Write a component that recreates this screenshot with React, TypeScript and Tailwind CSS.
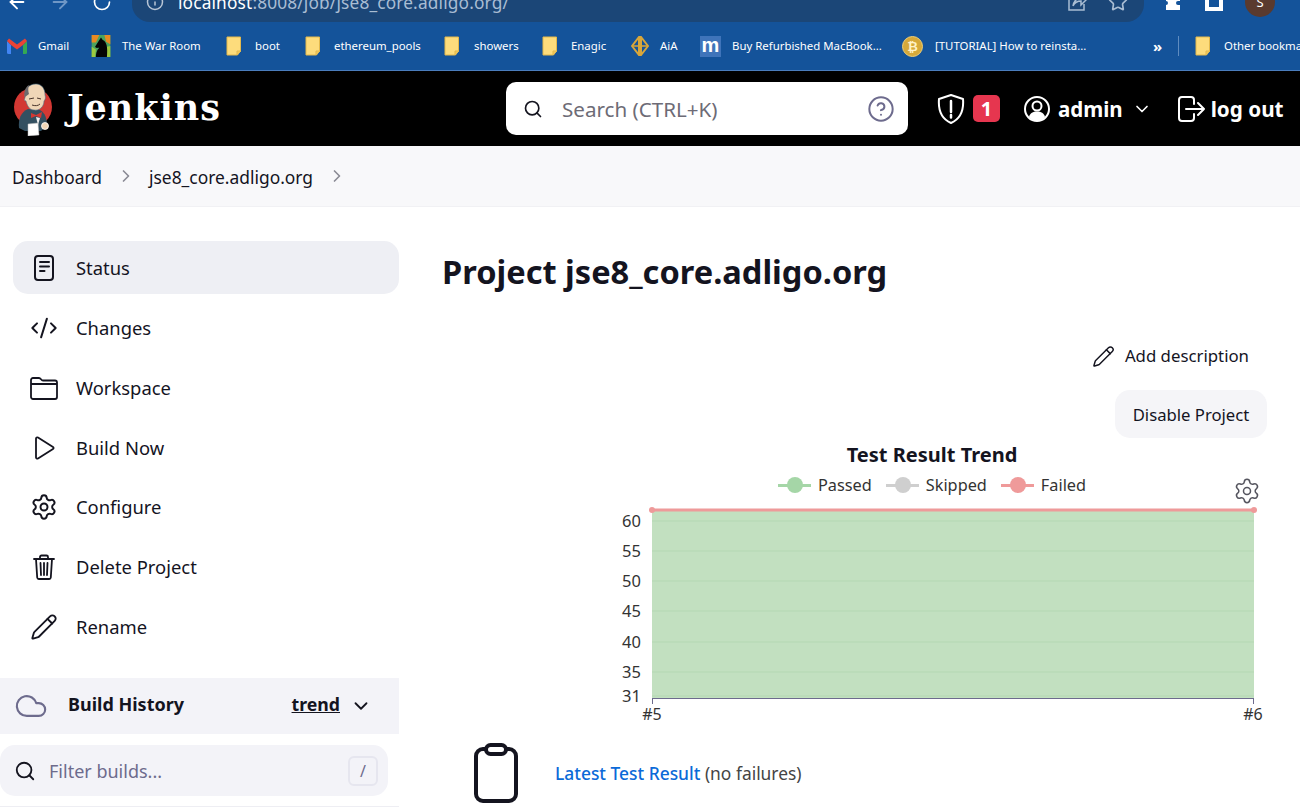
import { ArrowLeft, ArrowRight, ChevronDown, ChevronRight, CircleHelp, Cloud, CodeXml, Info, Pencil, RotateCw, Search, Settings, Star } from "lucide-react";
import type { ReactNode } from "react";

const font = "font-['Noto_Sans','Open_Sans',sans-serif]";

function FolderMark({ className }: { className: string }) {
  return (
    <svg viewBox="0 0 16 20" className={className}>
      <path d="M1 1h13.5v14l-3 4H1z" fill="#fddc7c" stroke="#e3b94c" strokeWidth="1" />
      <path d="M11 19v-4h4" fill="#f2c85c" stroke="#e3b94c" strokeWidth="1" />
    </svg>
  );
}

function GmailMark() {
  return (
    <svg viewBox="0 0 20 16" className="w-[20px] h-[16px]">
      <path d="M0 3v11.5A1.5 1.5 0 0 0 1.5 16H4V7z" fill="#4285f4" />
      <path d="M20 3v11.5a1.5 1.5 0 0 1-1.500 1.500H16V7z" fill="#34a853" />
      <path d="M0 3l4 4 6 4.500 6-4.500 4-4-2-2.500-8 6-8-6z" fill="#ea4335" />
    </svg>
  );
}

function KnightMark() {
  return (
    <svg viewBox="0 0 22 26" className="w-[22px] h-[22px]">
      <rect width="22" height="26" fill="#4ba35f" />
      <path d="M0 0h9l-4 9H0zM15 0h7v11l-5-3z" fill="#e98a22" />
      <path d="M0 14l5 3-1 9H0zM18 14l4-1v13h-5z" fill="#9bc93f" />
      <path d="M5 26c0-6 2-9 4-11-2 0-4 1-5-1l5-8 2-3 2 3c5 2 6 9 5 20z" fill="#050505" />
    </svg>
  );
}

function AiaMark() {
  return (
    <svg viewBox="0 0 18 20" className="w-[18px] h-[20px]">
      <path d="M8 1v18L1 10zM10 1v18l7-9z" fill="none" stroke="#d8a63a" strokeWidth="2" />
      <path d="M1 10h16" stroke="#d8a63a" strokeWidth="1.500" />
    </svg>
  );
}

function MMark() {
  return (
    <div className="w-[21px] h-[21px] bg-[#3f74ba] text-white text-[20px] leading-[18px] font-bold text-center font-['Liberation_Sans',sans-serif]">m</div>
  );
}

function CoinMark() {
  return (
    <div className="w-[21px] h-[21px] rounded-full bg-[#d6a93a] border border-[#f0cf76] text-[#fff2c6] text-[13px] leading-[19px] font-bold text-center font-['Liberation_Sans',sans-serif]">₿</div>
  );
}

const bookmarks: { label: string; icon: ReactNode; width: string; gap: string }[] = [
  { label: "Gmail", icon: <GmailMark />, width: "w-[83px]", gap: "w-[11px]" },
  { label: "The War Room", icon: <KnightMark />, width: "w-[136px]", gap: "w-[10px]" },
  { label: "boot", icon: <FolderMark className="w-[16px] h-[20px]" />, width: "w-[79px]", gap: "w-[13px]" },
  { label: "ethereum_pools", icon: <FolderMark className="w-[16px] h-[20px]" />, width: "w-[139px]", gap: "w-[13px]" },
  { label: "showers", icon: <FolderMark className="w-[16px] h-[20px]" />, width: "w-[98px]", gap: "w-[14px]" },
  { label: "Enagic", icon: <FolderMark className="w-[16px] h-[20px]" />, width: "w-[89px]", gap: "w-[13px]" },
  { label: "AiA", icon: <AiaMark />, width: "w-[69px]", gap: "w-[11px]" },
  { label: "Buy Refurbished MacBook...", icon: <MMark />, width: "w-[202px]", gap: "w-[11px]" },
  { label: "[TUTORIAL] How to reinsta...", icon: <CoinMark />, width: "w-[251px]", gap: "w-[12px]" },
];

function Bookmark({ label, icon, width, gap }: { label: string; icon: ReactNode; width: string; gap: string }) {
  return (
    <div className={`flex items-center shrink-0 ${width}`}>
      {icon}
      <div className={gap} />
      <span className="text-[11.4px] text-white whitespace-nowrap">{label}</span>
    </div>
  );
}

function BrowserBar() {
  return (
    <div className="bg-[#14539a] h-[71px] border-b border-[#4a7cbc] overflow-hidden">
      {/* toolbar is cut off by the top edge of the shot */}
      <div className="h-[22px] flex items-end overflow-hidden text-white">
        <div className="flex items-center h-[40px] w-[132px] pl-[6px] gap-[21px] shrink-0">
          <ArrowLeft size={22} />
          <ArrowRight size={22} className="text-[#6f97c6]" />
          <RotateCw size={20} />
        </div>
        <div className="flex items-center h-[40px] w-[1012px] shrink-0 rounded-[18px] bg-[#1b4677] pl-[14px] pr-[14px]">
          <Info size={18} className="text-[#b9c6d6]" />
          <span className="ml-[14px] pt-[2px] text-[17.3px] tracking-[0.15px] whitespace-nowrap">
            localhost<span className="text-[#a9bdd3]">:8008/job/jse8_core.adligo.org/</span>
          </span>
          <div className="ml-auto flex items-center gap-[21px] text-[#a9bdd3]">
            <svg viewBox="0 0 20 20" className="w-[20px] h-[20px]" fill="none" stroke="currentColor" strokeWidth="1.500">
              <path d="M17 12v6H2V5h7M6 14c1-5 4-8 8-8V2l5 6-5 5V9c-3 0-6 1-8 5z" />
            </svg>
            <Star size={20} className="mr-[2px]" />
          </div>
        </div>
        <div className="flex items-center h-[40px] pl-[19px] gap-[20px]">
          <svg viewBox="0 0 20 20" className="w-[20px] h-[20px]" fill="currentColor">
            <path d="M8 2a2 2 0 0 1 4 0v2h5v5h-2a2 2 0 0 0 0 4h2v5H3v-5a2 2 0 0 0 0-4V4h5z" />
          </svg>
          <div className="w-[18px] h-[18px] border-[4px] border-white bg-transparent ml-[2px]" />
          <div className="w-[30px] h-[30px] rounded-full bg-[#5a3a2e] text-[13px] text-white text-center leading-[30px] ml-[2px]">S</div>
        </div>
      </div>
      <div className="h-[48px] flex items-center pl-[7px]">
        {bookmarks.map((item) => (
          <Bookmark key={item.label} {...item} />
        ))}
        <span className="text-[15px] text-white font-bold w-[25px] shrink-0">»</span>
        <div className="w-px h-[20px] bg-[#5f8cc0] shrink-0" />
        <FolderMark className="w-[16px] h-[20px] ml-[16px] shrink-0" />
        <span className="text-[11.4px] text-white ml-[13px] whitespace-nowrap">Other bookmarks</span>
      </div>
    </div>
  );
}

function JenkinsLogo() {
  return (
    <svg viewBox="0 0 40 54" className="w-[40px] h-[54px]">
      <circle cx="20" cy="25" r="19" fill="#d33833" />
      <path d="M6 46c-1-9 2-16 9-19l12 1c5 3 7 8 7 16l-6 5H12z" fill="#335061" />
      <path d="M12 16c-1-9 4-14 11-14 6 0 9 5 9 11 1 3 0 5-1 6 0 6-5 10-10 9-5 0-7-5-8-9-2 0-2-2-1-3z" fill="#f0d6b7" stroke="#49728b" strokeWidth="0.600" />
      <path d="M12 15c-2-7 2-11 4-12-1 3-1 6 0 9z" fill="#6d6b6d" />
      <path d="M16 17l5-1M24 16l4 1M19 23c3 1 6 1 8-1" stroke="#49352c" strokeWidth="1" fill="none" />
      <path d="M18 31l5 2 6-3-1 6-5-2-5 2z" fill="#d33833" />
      <path d="M23 35l4 1-2 7z" fill="#eeeeee" />
      <path d="M15 42l10-1 1 12-11 1z" fill="#ffffff" stroke="#bbbbbb" strokeWidth="0.500" />
      <circle cx="32" cy="44" r="3.500" fill="#f0d6b7" stroke="#ffffff" strokeWidth="0.800" />
    </svg>
  );
}

function AppHeader() {
  return (
    <header className="h-[75px] bg-black flex items-center text-white shrink-0">
      <div className="w-[506px] flex items-center pl-[13px] shrink-0">
        <JenkinsLogo />
        <span className="ml-[14px] mb-[2px] text-[35px] leading-none font-bold tracking-[1px] font-['DejaVu_Serif','Liberation_Serif',serif]">Jenkins</span>
      </div>
      <div className="w-[402px] h-[53px] rounded-[10px] bg-white flex items-center pl-[17px] pr-[13px] shrink-0">
        <Search size={20} className="text-[#14141f]" />
        <span className="ml-[19px] pt-[1px] text-[20.6px] text-[#6d6b76]">Search (CTRL+K)</span>
        <CircleHelp size={28} strokeWidth={1.7} className="ml-auto text-[#6d6b8d]" />
      </div>
      <svg viewBox="0 0 28 32" className="w-[28px] h-[32px] ml-[29px] shrink-0" fill="none" stroke="white" strokeWidth="2">
        <path d="M14 2l12 4c1 12-3 20-12 24C5 26 1 18 2 6z" strokeLinejoin="round" />
        <path d="M14 8v11M14 22v2.500" strokeWidth="2.500" strokeLinecap="round" />
      </svg>
      <div className="ml-[8px] w-[27px] h-[27px] rounded-[5px] bg-[#e6364f] text-[20px] leading-[27px] font-bold text-center shrink-0">1</div>
      <svg viewBox="0 0 26 26" className="w-[26px] h-[26px] ml-[24px] shrink-0">
        <circle cx="13" cy="13" r="12" fill="none" stroke="white" strokeWidth="2" />
        <circle cx="13" cy="10" r="4.500" fill="none" stroke="white" strokeWidth="2" />
        <path d="M5 21c1-4 4-5.500 8-5.500s7 1.500 8 5.500c-2 2.500-5 4-8 4s-6-1.500-8-4z" fill="white" />
      </svg>
      <span className="ml-[8px] pt-[2px] text-[20.5px] font-bold leading-none">admin</span>
      <ChevronDown size={20} strokeWidth={2} className="ml-[9px] shrink-0" />
      <svg viewBox="0 0 28 28" className="w-[28px] h-[28px] ml-[25px] shrink-0" fill="none" stroke="white" strokeWidth="2" strokeLinecap="round" strokeLinejoin="round">
        <path d="M17 9V5a3 3 0 0 0-3-3H5a3 3 0 0 0-3 3v18a3 3 0 0 0 3 3h9a3 3 0 0 0 3-3v-4M9 14h18M21 8l6 6-6 6" />
      </svg>
      <span className="ml-[6px] pt-[2px] text-[20.7px] font-bold leading-none whitespace-nowrap">log out</span>
    </header>
  );
}

function Breadcrumbs() {
  return (
    <nav className="h-[61px] bg-[#f8f8fa] border-b border-[#f1f1f4] flex items-center pl-[12px] text-[17.4px] text-[#14141f] shrink-0">
      <span className="pt-[2px]">Dashboard</span>
      <ChevronRight size={20} className="ml-[14px] text-[#8a8a94]" />
      <span className="ml-[13px] pt-[2px]">jse8_core.adligo.org</span>
      <ChevronRight size={20} className="ml-[14px] text-[#8a8a94]" />
    </nav>
  );
}

const iconClass = "w-[28px] h-[28px] text-[#14141f]";

function StatusIcon() {
  return (
    <svg viewBox="0 0 28 28" className={iconClass} fill="none" stroke="currentColor" strokeWidth="2" strokeLinecap="round">
      <rect x="5" y="2" width="18" height="24" rx="3" />
      <path d="M10 8h9M10 12.500h9M10 17h4.500" />
    </svg>
  );
}

function FolderIcon() {
  return (
    <svg viewBox="0 0 28 28" className={iconClass} fill="none" stroke="currentColor" strokeWidth="1.800" strokeLinejoin="round">
      <path d="M1 8V6a2 2 0 0 1 2-2h6c2 0 2 2.500 4 2.500h12a2 2 0 0 1 2 2V23a2 2 0 0 1-2 2H3a2 2 0 0 1-2-2zM1 10h26" />
    </svg>
  );
}

function PlayIcon() {
  return (
    <svg viewBox="0 0 28 28" className={iconClass} fill="none" stroke="currentColor" strokeWidth="1.800" strokeLinejoin="round">
      <path d="M6 4.500c0-1 1-1.500 2-1l15 9.500c.8.500.8 1.500 0 2L8 24.500c-1 .500-2 0-2-1z" />
    </svg>
  );
}

function TrashIcon() {
  return (
    <svg viewBox="0 0 28 28" className={iconClass} fill="none" stroke="currentColor" strokeWidth="1.800" strokeLinecap="round" strokeLinejoin="round">
      <path d="M4 6h20M10 6V4a1.500 1.500 0 0 1 1.500-1.500h5A1.500 1.500 0 0 1 18 4v2M6 6l1.200 18.500A1.700 1.700 0 0 0 9 26h10a1.700 1.700 0 0 0 1.800-1.500L22 6M10.500 10l.5 12M14 10v12M17.500 10l-.5 12" />
    </svg>
  );
}

const sideItems: { label: string; icon: ReactNode; row: string }[] = [
  { label: "Status", icon: <StatusIcon />, row: "h-[53px] bg-[#eeeff4] mt-[34px] mb-[7px]" },
  { label: "Changes", icon: <CodeXml className={iconClass} strokeWidth={1.7} />, row: "h-[53px] mb-[7px]" },
  { label: "Workspace", icon: <FolderIcon />, row: "h-[53px] mb-[7px]" },
  { label: "Build Now", icon: <PlayIcon />, row: "h-[53px] mb-[6px]" },
  { label: "Configure", icon: <Settings className={iconClass} strokeWidth={1.7} />, row: "h-[53px] mb-[7px]" },
  { label: "Delete Project", icon: <TrashIcon />, row: "h-[53px] mb-[7px]" },
  { label: "Rename", icon: <Pencil className={iconClass} strokeWidth={1.6} />, row: "h-[53px]" },
];

function Sidebar() {
  return (
    <aside className="w-[399px] shrink-0 flex flex-col">
      <div className="pl-[13px]">
        {sideItems.map((item) => (
          <div key={item.label} className={`flex items-center rounded-[15px] pl-[17px] ${item.row}`}>
            {item.icon}
            <span className="ml-[18px] text-[18.4px] text-[#14141f]">{item.label}</span>
          </div>
        ))}
      </div>
      <div className="mt-[25px] h-[56px] bg-[#f3f3f8] flex items-center pl-[14px] pr-[28px] shrink-0">
        <Cloud size={34} strokeWidth={1.5} className="text-[#6d6b8d]" />
        <span className="ml-[20px] mb-[3px] text-[18px] font-bold text-[#14141f]">Build History</span>
        <span className="ml-auto mb-[3px] text-[17.7px] font-bold text-[#14141f] underline">trend</span>
        <ChevronDown size={22} strokeWidth={2} className="ml-[10px] mr-[-1px] text-[#14141f]" />
      </div>
      <div className="mt-[11px] w-[388px] h-[51px] rounded-[15px] bg-[#f3f3f8] flex items-center pl-[14px] pr-[10px] shrink-0">
        <Search size={22} className="text-[#14141f]" />
        <span className="ml-[13px] pt-[2px] text-[18px] text-[#6d6b8d]">Filter builds...</span>
        <div className="ml-auto w-[30px] h-[30px] rounded-[6px] border-2 border-[#e6e6ef] text-[16px] leading-[26px] text-center text-[#6d6b8d]">/</div>
      </div>
      <div className="mt-[10px] h-px bg-[#eeeef3]" />
    </aside>
  );
}

function LegendItem({ label, line, dot }: { label: string; line: string; dot: string }) {
  return (
    <div className="flex items-center">
      <div className={`relative w-[33px] h-[3px] ${line}`}>
        <div className={`absolute left-[9px] top-[-6.500px] w-[16px] h-[16px] rounded-full ${dot}`} />
      </div>
      <span className="ml-[7px] text-[16.3px] text-[#333333]">{label}</span>
    </div>
  );
}

const yTicks = [
  { label: "60", y: 21 },
  { label: "55", y: 51 },
  { label: "50", y: 81 },
  { label: "45", y: 111 },
  { label: "40", y: 142 },
  { label: "35", y: 172 },
  { label: "31", y: 196 },
];

function TrendChart() {
  return (
    <svg viewBox="0 0 700 226" className="w-[700px] h-[226px] ml-[201px] shrink-0 block">
      <rect x="52" y="10" width="602" height="188" fill="#c2e0c0" />
      {yTicks.map((tick) => (
        <g key={tick.label}>
          <path d={`M52 ${tick.y}h602`} stroke="#b4d8b3" strokeWidth="1" />
          <text x="41" y={tick.y + 6} textAnchor="end" fontSize="16.500" fill="#333333">{tick.label}</text>
        </g>
      ))}
      <path d="M52 10h602" stroke="#ee9a9a" strokeWidth="3" />
      <circle cx="52" cy="10" r="3" fill="#ee9a9a" />
      <circle cx="654" cy="10" r="3" fill="#ee9a9a" />
      <path d="M52 198.500h602M52.500 198v6M653.500 198v6" stroke="#6d6b8d" strokeWidth="1" />
      <text x="52" y="220" textAnchor="middle" fontSize="16" fill="#333333">#5</text>
      <text x="653" y="220" textAnchor="middle" fontSize="16" fill="#333333">#6</text>
    </svg>
  );
}

function ProjectMain() {
  return (
    <main className="flex-1 min-w-0 flex flex-col">
      <h1 className="mt-[43px] ml-[43px] text-[32.6px] leading-[44px] font-bold text-[#14141f] whitespace-nowrap">Project jse8_core.adligo.org</h1>
      <div className="mt-[47px] flex items-center justify-end pr-[51px] h-[30px]">
        <Pencil size={23} strokeWidth={1.5} className="text-[#14141f]" />
        <span className="ml-[10px] text-[16.8px] text-[#14141f]">Add description</span>
      </div>
      <div className="mt-[19px] flex justify-end pr-[33px]">
        <div className="w-[152px] h-[48px] pt-[1px] rounded-[15px] bg-[#f5f5f8] flex items-center justify-center text-[16.7px] text-[#14141f]">Disable Project</div>
      </div>
      <div className="relative flex flex-col shrink-0">
        <div className="mt-[2px] ml-[133px] text-center text-[20px] leading-[30px] font-bold text-[#14141f] w-[800px]">Test Result Trend</div>
        <div className="ml-[379px] h-[30px] flex items-center gap-[14px]">
          <LegendItem label="Passed" line="bg-[#a5d6a7]" dot="bg-[#a5d6a7]" />
          <LegendItem label="Skipped" line="bg-[#cfcfcf]" dot="bg-[#cfcfcf]" />
          <LegendItem label="Failed" line="bg-[#ef9a9a]" dot="bg-[#ef9a9a]" />
        </div>
        <Settings size={28} strokeWidth={1.3} className="absolute left-[834px] top-[39px] text-[#55555f]" />
        <TrendChart />
      </div>
      <div className="mt-[17px] ml-[75px] flex items-center">
        <svg viewBox="0 0 44 60" className="w-[44px] h-[60px] shrink-0" fill="none" stroke="#14141f" strokeWidth="4">
          <rect x="2" y="6" width="40" height="52" rx="7" />
          <rect x="12" y="2" width="20" height="9" rx="4.500" fill="white" />
        </svg>
        <p className="ml-[37px] text-[17.4px] text-[#444444]">
          <span className="font-medium text-[#0b6ad8]">Latest Test Result</span> (no failures)
        </p>
      </div>
    </main>
  );
}

export default function App() {
  return (
    <div className={`h-[807px] w-[1300px] overflow-hidden bg-white flex flex-col ${font}`}>
      <BrowserBar />
      <AppHeader />
      <Breadcrumbs />
      <div className="flex flex-1 min-h-0">
        <Sidebar />
        <ProjectMain />
      </div>
    </div>
  );
}
